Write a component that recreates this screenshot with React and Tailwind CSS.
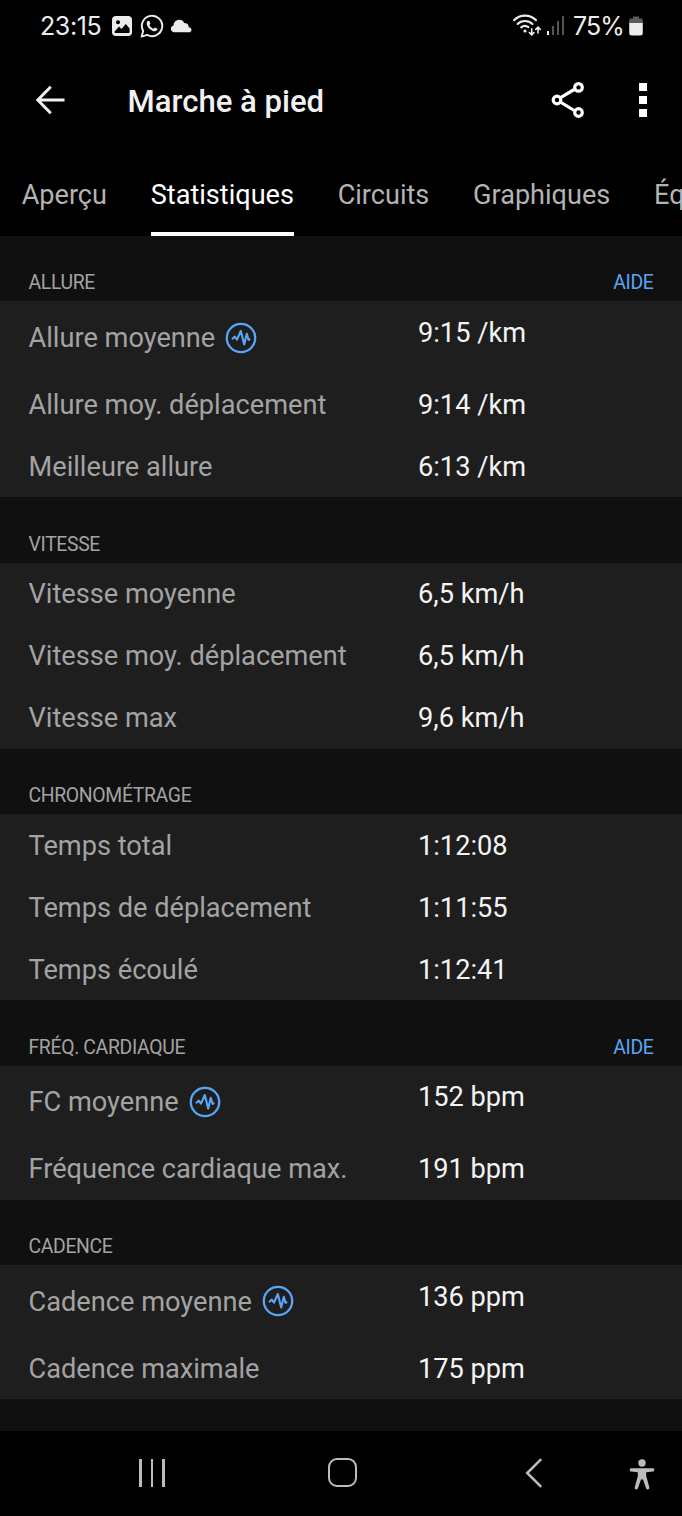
import React, { useState } from 'react';

const tabs = ['Aperçu', 'Statistiques', 'Circuits', 'Graphiques', 'Éq'];

const sections = [
  {
    title: 'ALLURE',
    help: true,
    rows: [
      { label: 'Allure moyenne', value: '9:15 /km', chart: true },
      { label: 'Allure moy. déplacement', value: '9:14 /km' },
      { label: 'Meilleure allure', value: '6:13 /km' },
    ],
  },
  {
    title: 'VITESSE',
    rows: [
      { label: 'Vitesse moyenne', value: '6,5 km/h' },
      { label: 'Vitesse moy. déplacement', value: '6,5 km/h' },
      { label: 'Vitesse max', value: '9,6 km/h' },
    ],
  },
  {
    title: 'CHRONOMÉTRAGE',
    rows: [
      { label: 'Temps total', value: '1:12:08' },
      { label: 'Temps de déplacement', value: '1:11:55' },
      { label: 'Temps écoulé', value: '1:12:41' },
    ],
  },
  {
    title: 'FRÉQ. CARDIAQUE',
    help: true,
    rows: [
      { label: 'FC moyenne', value: '152 bpm', chart: true },
      { label: 'Fréquence cardiaque max.', value: '191 bpm' },
    ],
  },
  {
    title: 'CADENCE',
    rows: [
      { label: 'Cadence moyenne', value: '136 ppm', chart: true },
      { label: 'Cadence maximale', value: '175 ppm' },
    ],
  },
];

const ChartIcon = () => (
  <svg className="w-8 h-8 shrink-0" viewBox="0 0 32 32" fill="none" stroke="#58a6f5">
    <circle cx="16" cy="16" r="14.2" strokeWidth="2.3" />
    <path
      d="M7 17.2 L9.8 14.6 L12 17.6 L15.8 9 L19.2 22.6 L21.8 11.8 L23.6 18 L25 16.6"
      strokeWidth="2.1"
      strokeLinejoin="round"
    />
  </svg>
);

const StatusBar = () => (
  <div className="h-[53px] flex items-center justify-between pl-10 pr-[39px] text-[#ececec] font-['Inter',sans-serif] text-[25px]">
    <div className="flex items-center">
      <span className="w-[71.5px] tracking-[-0.4px]">23:15</span>
      {/* gallery */}
      <svg className="w-5 h-5 mr-2 -mt-px" viewBox="0 0 20 20">
        <rect width="20" height="20" rx="4" fill="#ececec" />
        <circle cx="6" cy="6.2" r="2" fill="#000" />
        <path d="M2.5 15.8 L7 10.6 L9.5 13 L13.8 8 L17.6 12.4 V16 Q17.6 17 16.6 17 H3.5 Q2.5 17 2.5 15.8Z" fill="#000" />
      </svg>
      {/* whatsapp */}
      <svg className="w-6 h-6 mr-[6px] -mt-px" viewBox="0 0 24 24">
        <path
          d="M1.6 22.6 L3.2 17 A10.2 10.2 0 1 1 7.2 20.9 Z"
          fill="none"
          stroke="#ececec"
          strokeWidth="1.9"
          strokeLinejoin="round"
        />
        <path
          d="M8.4 6.7 C7.7 6.7 6.5 7.8 6.7 9.7 C7 13 10.8 16.8 14.2 17.2 C16 17.4 17.4 16.2 17.5 14.8 L14.8 13.4 L13.5 14.8 C11.7 14.1 10.2 12.7 9.4 10.9 L10.4 9.6 L9.4 7 Z"
          fill="#ececec"
        />
      </svg>
      {/* cloud */}
      <svg className="w-[23px] h-[14px] -mt-[2px]" viewBox="0 0 23 14">
        <path d="M4 13.3 A3.4 3.4 0 0 1 3.6 6.6 A5.6 5.6 0 0 1 14.2 4 A4.6 4.6 0 0 1 18.8 8.2 A2.7 2.7 0 0 1 20 13.3Z" fill="#ececec" />
      </svg>
    </div>
    <div className="flex items-center">
      {/* wifi with traffic arrows */}
      <svg className="w-7 h-[22px] mr-1.5 -mt-1" viewBox="0 0 28 22" fill="none" stroke="#ececec" strokeLinecap="round">
        <path d="M1 6.2 A15.5 15.5 0 0 1 23 6.2" strokeWidth="2.1" />
        <path d="M4.6 10 A10.6 10.6 0 0 1 19.4 10" strokeWidth="2.1" />
        <path d="M8.2 13.4 A5.7 5.7 0 0 1 15.4 13.2" strokeWidth="2.1" />
        <circle cx="12" cy="17" r="1.6" fill="#ececec" stroke="none" />
        <path d="M18.7 14.8 V20.6 M16.5 18.6 L18.7 20.8 L20.9 18.6 M25 19 V13.4 M22.8 15.4 L25 13.2 L27.2 15.4" strokeWidth="1.6" />
      </svg>
      {/* mobile signal */}
      <div className="flex items-end gap-[3px] h-[19px] mr-[9px] -mt-0.5">
        <div className="w-[2px] h-1 bg-[#ececec]" />
        <div className="w-[2px] h-[9px] bg-[#555]" />
        <div className="w-[2px] h-[14px] bg-[#555]" />
        <div className="w-[2px] h-[19px] bg-[#555]" />
      </div>
      <span className="tracking-[-0.9px]">75%</span>
      {/* battery */}
      <svg className="w-[14px] h-5 ml-[5px] -mt-0.5" viewBox="0 0 14 20">
        <path d="M4 0.5 H10 V2.5 H12 Q13.8 2.5 13.8 4.5 V8 H0.2 V4.5 Q0.2 2.5 2 2.5 H4Z" fill="#5c5c5c" />
        <path d="M0.2 7 H13.8 V17 Q13.8 19.5 11.5 19.5 H2.5 Q0.2 19.5 0.2 17Z" fill="#ececec" />
      </svg>
    </div>
  </div>
);

const TopBar = () => (
  <header className="h-[95px] flex items-center pl-[35px] pr-[35px] text-[#f1f1f1]">
    <button className="-mt-px">
      <svg className="w-[31px] h-[30px]" viewBox="0 0 31 30" fill="none" stroke="currentColor" strokeWidth="3">
        <path d="M15.8 1.8 L2.8 15 L15.8 28.2 M2.8 15 H29.5" />
      </svg>
    </button>
    <h1 className="ml-[61.5px] pt-[3px] flex-1 text-[31.1px] font-medium whitespace-nowrap">Marche à pied</h1>
    <button className="-mt-px">
      <svg className="w-[34px] h-9" viewBox="0 0 34 36" fill="none" stroke="#fff" strokeWidth="3.2">
        <path d="M9.5 15.6 L23.2 7.5 M9.5 20.2 L23.2 28.5" />
        <circle cx="6" cy="18" r="3.8" />
        <circle cx="27.5" cy="5.4" r="3.8" />
        <circle cx="27.5" cy="30.5" r="3.8" />
      </svg>
    </button>
    <button className="ml-[54px] -mt-px flex flex-col gap-[5px]">
      <span className="w-2 h-2 bg-white" />
      <span className="w-2 h-2 bg-white" />
      <span className="w-2 h-2 bg-white" />
    </button>
  </header>
);

const Section = ({ title, help, rows }) => (
  <section>
    <div className="h-[65.4px] flex items-end justify-between px-[28.5px] pb-[4px] text-[19.4px] leading-7 tracking-[-0.35px]">
      <h2 className="text-[#a3a3a3]">{title}</h2>
      {help && <a className="text-[#58a6f5]">AIDE</a>}
    </div>
    <div className="bg-[#1e1e1e]">
      {rows.map((row) => (
        <div key={row.label} className={`flex items-start px-[28.5px] text-[27.2px] ${row.chart ? 'h-[72px]' : 'h-[62px]'}`}>
          <div className={`w-[389.5px] flex items-center gap-2.5 text-[#a3a3a3] ${row.chart ? 'h-[73px]' : 'h-[64px]'}`}>
            <span className={row.chart ? 'pt-px' : ''}>{row.label}</span>
            {row.chart && <ChartIcon />}
          </div>
          <div className="h-[64px] flex items-center text-[#f4f4f4]">{row.value}</div>
        </div>
      ))}
    </div>
  </section>
);

const NavBar = () => (
  <nav className="h-[85px] bg-black flex items-center pl-[139px] pb-[2px] text-[#bcbcbc]">
    <div className="flex gap-[9px]">
      <span className="w-[2.5px] h-7 bg-current" />
      <span className="w-[2.5px] h-7 bg-current" />
      <span className="w-[2.5px] h-7 bg-current" />
    </div>
    <div className="ml-[163.5px] w-[29px] h-[29px] rounded-[9px] border-[2.5px] border-current" />
    <svg className="ml-[167.5px] w-[18px] h-[30px]" viewBox="0 0 18 30" fill="none" stroke="currentColor" strokeWidth="2.5">
      <path d="M16.2 1.2 L2.2 15 L16.2 28.8" />
    </svg>
    <svg className="ml-[86px] mt-[3px] w-[26px] h-[31px]" viewBox="0 0 26 31" fill="currentColor">
      <circle cx="13" cy="4" r="3.7" />
      <path d="M2 9.3 H24 Q25.3 9.3 25.3 10.9 Q25.3 12.4 24 12.4 L17.2 13.2 V17 L20.4 28.6 Q20.6 30.3 19 30.5 Q17.4 30.6 17 29 L14 20.5 H12 L9 29 Q8.6 30.6 7 30.5 Q5.4 30.3 5.7 28.6 L8.8 17 V13.2 L2 12.4 Q0.7 12.4 0.7 10.9 Q0.7 9.3 2 9.3Z" />
    </svg>
  </nav>
);

export default function App() {
  const [activeTab, setActiveTab] = useState('Statistiques');

  return (
    <div className="w-full h-[1516px] flex flex-col overflow-hidden bg-[#101010] font-['Roboto',sans-serif]">
      <div className="bg-black">
        <StatusBar />
        <TopBar />
        <div className="h-[88px] flex gap-[43.7px] pl-[21.7px] overflow-hidden text-[27.1px]">
          {tabs.map((tab) => (
            <button
              key={tab}
              onClick={() => setActiveTab(tab)}
              className={`shrink-0 pt-[10px] border-b-4 ${
                tab === activeTab ? 'text-white border-white' : 'text-[#b3b3b3] border-transparent'
              }`}
            >
              {tab}
            </button>
          ))}
        </div>
      </div>
      <main className="flex-1">
        {sections.map((section) => (
          <Section key={section.title} {...section} />
        ))}
      </main>
      <NavBar />
    </div>
  );
}
